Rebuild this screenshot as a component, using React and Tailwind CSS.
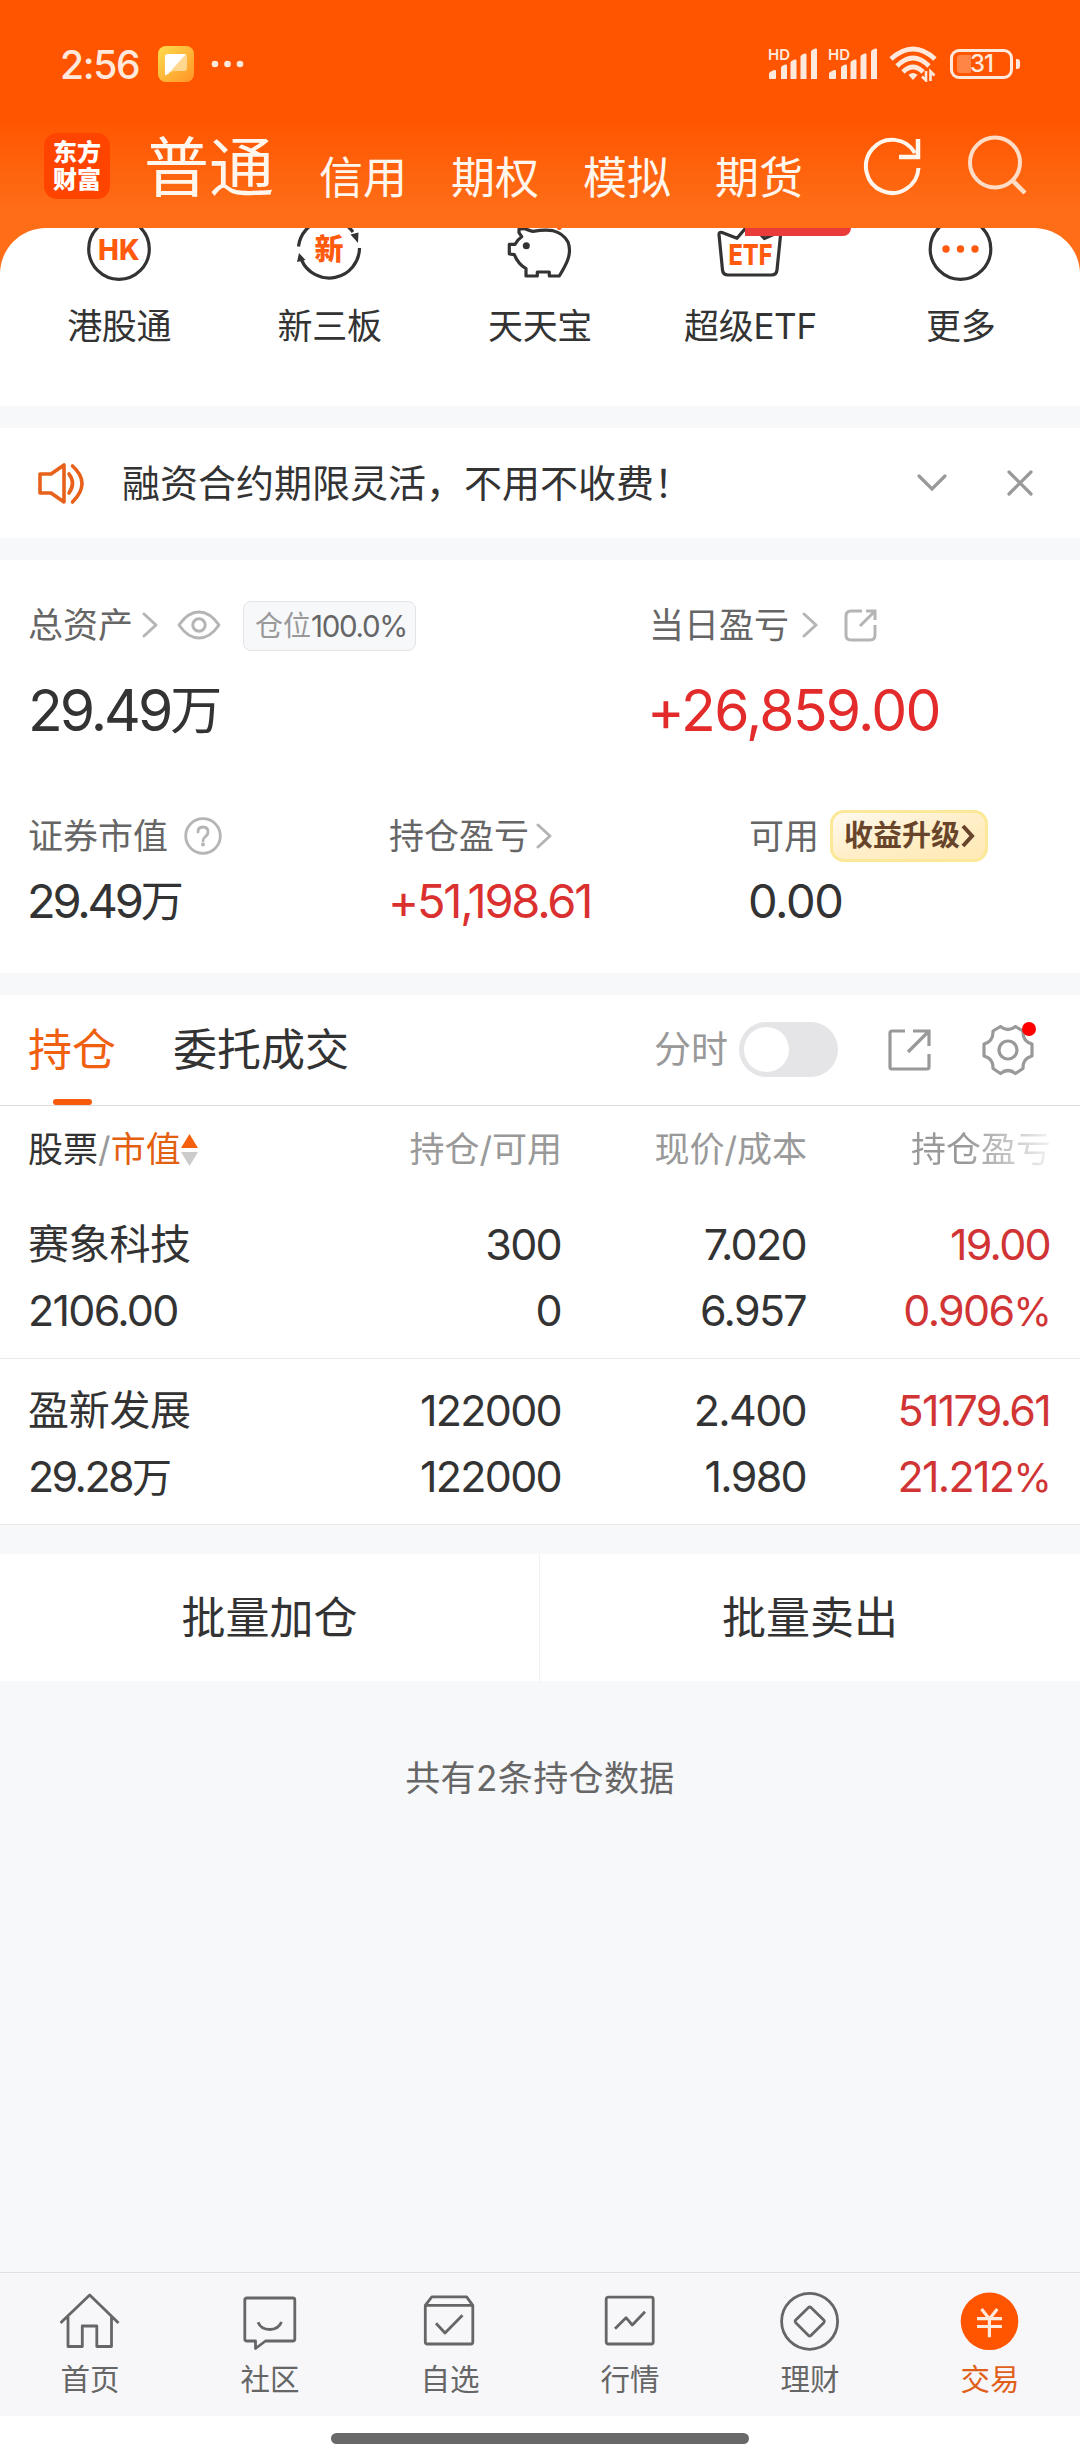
import React from "react";

const SignalBars = () => (
  <svg width="52" height="36" viewBox="0 0 52 36" fill="#ffe9dd">
    <text x="1" y="14" fontSize="15" fontWeight="600" textLength="22" lengthAdjust="spacingAndGlyphs">
      HD
    </text>
    <path d="M2 32v-4q0-1 1-2l4-2q2-.5 2 1v7q0 1-1 1h-5q-1 0-1-1z" />
    <path d="M14 33v-11q0-1 1-2l3-1.500q2-.5 2 1v13.500z" />
    <path d="M23.500 33v-16q0-1 1-2l3-1.500q2-.5 2 1v18.500z" />
    <path d="M33.500 33v-22q0-1 1-2l3-1.500q2-.5 2 1v24.500z" />
    <path d="M44 33v-27q0-1 1-2l3-1.500q2-.5 2 1v29.500z" />
  </svg>
);

const Chevron = ({ className = "" }) => (
  <svg className={className} width="16" height="26" viewBox="0 0 16 26" fill="none" stroke="#b5b5b5" strokeWidth="3" strokeLinecap="round" strokeLinejoin="round">
    <path d="M2 2l12 11L2 24" />
  </svg>
);

const StatusBar = () => (
  <div className="flex h-[128px] items-center pl-[60px] pr-[60px] text-[#ffe9dd]">
    <span className="w-[80px] text-[39px] leading-none font-medium tracking-[-1.300px] whitespace-nowrap">2:56</span>
    <svg className="ml-[18px]" width="36" height="36" viewBox="0 0 36 36">
      <defs>
        <linearGradient id="note" x1="0" y1="0" x2="1" y2="1">
          <stop offset="0" stopColor="#ffdc4e" />
          <stop offset="1" stopColor="#ff9426" />
        </linearGradient>
      </defs>
      <rect width="36" height="36" rx="8" fill="url(#note)" />
      <path d="M7 11q0-3 3-3h16q3 0 3 3v11q0 3-3 3H15l-8 4z" fill="#ffd78f" />
      <path d="M7 11q0-3 3-3h18L10 28l-3 1.500z" fill="#fff" />
    </svg>
    <svg className="ml-[17px]" width="34" height="8" viewBox="0 0 34 8" fill="#ffe9dd">
      <circle cx="4" cy="4" r="3.300" />
      <circle cx="16.500" cy="4" r="3.300" />
      <circle cx="29" cy="4" r="3.300" />
    </svg>
    <div className="ml-auto flex items-center">
      <SignalBars />
      <div className="ml-[8px]">
        <SignalBars />
      </div>
      <svg className="ml-[10px]" width="48" height="36" viewBox="0 0 48 36" fill="none" stroke="#ffe9dd" strokeWidth="4.800">
        <path d="M2 13Q24-7 46 13" />
        <path d="M8 20Q24 4 40 20" />
        <path d="M14 26Q24 16 34 26" />
        <path d="M24 34l-4.500-5q4.500-4 9 0z" fill="#ffe9dd" stroke="none" />
        <path d="M37 25v9.500l-4-4M41.500 35v-9.500l4 4" strokeWidth="2.600" />
      </svg>
      <div className="ml-[13px] flex h-[30px] w-[63px] items-center rounded-[9px] border-[3px] border-[#ffe9dd] pl-[4px]">
        <div className="h-[18px] w-[14px] rounded-l-[3px] bg-[#ff8547]" />
        <span className="ml-[-1px] text-[24px] leading-none font-medium tracking-[-1px]">31</span>
      </div>
      <div className="ml-[3px] h-[10px] w-[4px] rounded-r-[3px] bg-[#ffe9dd]" />
    </div>
  </div>
);

const Header = () => (
  <header className="h-[228px] bg-[linear-gradient(180deg,#ff5500_0px,#ff5500_118px,#ff6d17_210px,#ff6d17_228px)]">
    <StatusBar />
    <div className="flex h-[76px] items-center pl-[44px] text-[#fff6ee]">
      <div className="flex h-[66px] w-[66px] flex-col items-center justify-center rounded-[13px] bg-[#ff4400] text-[24px] leading-[27px] font-black text-white">
        <span>东方</span>
        <span>财富</span>
      </div>
      <span className="ml-[34px] pt-[4px] text-[65px] leading-[76px]">普通</span>
      <nav className="ml-[45px] flex gap-[44px] pt-[23px] text-[44px] leading-[54px]">
        <span>信用</span>
        <span>期权</span>
        <span>模拟</span>
        <span>期货</span>
      </nav>
      <svg className="ml-[58px]" width="64" height="64" viewBox="0 0 64 64" fill="none" stroke="#fff6ee" strokeWidth="4">
        <path d="M57.500 34A26.300 26.600 0 1 1 54 19" />
        <path d="M57 5v18H38" strokeWidth="4.500" />
      </svg>
      <svg className="ml-[42px]" width="64" height="64" viewBox="0 0 64 64" fill="none" stroke="#ffdcc6" strokeWidth="4">
        <circle cx="28" cy="28.500" r="25" />
        <path d="M45.500 46.500L58 59" strokeWidth="4.500" />
      </svg>
    </div>
  </header>
);

const entries = [
  {
    label: "港股通",
    icon: (
      <>
        <circle cx="33" cy="21" r="30.300" />
        <text x="12" y="31.500" fontSize="29" fontWeight="800" textLength="41.500" lengthAdjust="spacingAndGlyphs" fill="#ff5a0e" stroke="none">
          HK
        </text>
      </>
    ),
  },
  {
    label: "新三板",
    icon: (
      <g transform="translate(-1 0)">
        <path d="M2.500 18.500A30.300 30.300 0 0 1 57 4M63.500 20A30.300 30.300 0 0 1 5.500 32" />
        <path d="M54.500 6.500l8-2-.5 10.500zM1 34l2-9 6.500 7z" fill="#333" stroke="none" />
        <text x="18.500" y="31.500" fontSize="29" fontWeight="800" fill="#ff5a0e" stroke="none">
          新
        </text>
      </g>
    ),
  },
  {
    label: "天天宝",
    icon: (
      <>
        <path d="M2.300 16.300H8Q10 12 14.700 8.700L12 4.700V1.200Q17 0 20 1.500T26 3.300Q38 1.500 46 2.700 56 5 61 14 64 22 61 31 59 37 52.300 48H42.300V44H30.300V48H19V40.700Q11 36 7.300 26.700L2.300 26z" />
        <circle cx="19.300" cy="17.700" r="3.500" fill="#333" stroke="none" />
        <circle cx="52.300" cy="-.5" r="2.500" fill="#ff5a0e" stroke="none" />
      </>
    ),
  },
  {
    label: "超级ETF",
    badge: true,
    icon: (
      <>
        <path d="M2 6.500L5.500 42Q6 47 11 47H54.500Q59.500 47 60 42L63.500 7.500Q63 3 60 5L47.300 10.500 33-5 20 10.300 5 4.500Q2 3.500 2 6.500z" />
        <text x="11.500" y="36.800" fontSize="28.500" fontWeight="800" textLength="44" lengthAdjust="spacingAndGlyphs" fill="#ff5a0e" stroke="none">
          ETF
        </text>
      </>
    ),
  },
  {
    label: "更多",
    icon: (
      <>
        <circle cx="32.500" cy="21" r="30.300" />
        <g fill="#ff5a0e" stroke="none">
          <circle cx="18" cy="21" r="3.700" />
          <circle cx="32.500" cy="21" r="3.700" />
          <circle cx="47" cy="21" r="3.700" />
        </g>
      </>
    ),
  },
];

const QuickEntries = () => (
  <section className="h-[178px] bg-[#ff6d17]">
    <div className="grid h-full grid-cols-5 overflow-hidden rounded-t-[46px] bg-white px-[14px]">
      {entries.map((entry) => (
        <div key={entry.label} className="relative flex flex-col items-center">
          <svg width="66" height="64" viewBox="0 0 66 64" fill="none" stroke="#333" strokeWidth="3.200" strokeLinejoin="round">
            {entry.icon}
          </svg>
          {entry.badge && <div className="absolute top-0 left-[100px] h-[8px] w-[106px] rounded-br-[14px] bg-[#ea3a3a]" />}
          <span className="mt-[12px] text-[35px] leading-[44px] tracking-[-0.3px] text-[#333]">{entry.label}</span>
        </div>
      ))}
    </div>
  </section>
);

const Notice = () => (
  <section className="mt-[22px] flex h-[110px] items-center bg-white pl-[36px] pr-[45px]">
    <svg width="50" height="44" viewBox="0 0 50 44" fill="none" stroke="#e8611a" strokeWidth="3.600" strokeLinejoin="round" strokeLinecap="round">
      <path d="M4 13h11L28 4v37L15 32H4z" />
      <path d="M33 13q7 9 0 19M36.500 5q19 17 0 36" />
    </svg>
    <span className="ml-[36px] text-[38px] leading-[50px] text-[#333]">融资合约期限灵活，不用不收费！</span>
    <svg className="ml-auto" width="32" height="20" viewBox="0 0 32 20" fill="none" stroke="#999" strokeWidth="3.200" strokeLinecap="round">
      <path d="M3 3l13 13L29 3" />
    </svg>
    <svg className="ml-[57px]" width="30" height="30" viewBox="0 0 30 30" fill="none" stroke="#999" strokeWidth="3.200" strokeLinecap="round">
      <path d="M4 4l22 22M26 4L4 26" />
    </svg>
  </section>
);

const Assets = () => (
  <section className="mt-[22px] h-[413px] bg-white pt-[39px] pl-[28px] text-[35px] text-[#666]">
    <div className="flex">
      <div className="w-[621px]">
        <div className="flex h-[52px] items-center">
          <span>总资产</span>
          <Chevron className="ml-[9px]" />
          <svg className="ml-[19px]" width="44" height="30" viewBox="0 0 44 30" fill="none" stroke="#b5b5b5" strokeWidth="3">
            <path d="M2 15Q11 2 22 2T42 15Q33 28 22 28T2 15z" strokeLinejoin="round" />
            <circle cx="22" cy="15" r="6.200" />
          </svg>
          <span className="mt-[2px] ml-[22px] flex h-[50px] w-[173px] items-center rounded-[8px] border border-[#e4e4e8] bg-[#f7f8fa] pl-[11px] text-[28px] text-[#999]">
            仓位<span className="text-[29.500px] tracking-[-1.300px] text-[#666]">100.0%</span>
          </span>
        </div>
        <div className="mt-[30px] flex h-[60px] items-center text-[57px] tracking-[-3px] text-[#333]">
          29.49<span className="text-[52px]">万</span>
        </div>
      </div>
      <div>
        <div className="flex h-[52px] items-center">
          <span>当日盈亏</span>
          <Chevron className="ml-[13px]" />
          <svg className="ml-[25px]" width="36" height="36" viewBox="0 0 36 36" fill="none" stroke="#b5b5b5" strokeWidth="3">
            <path d="M19 4H8q-5 0-5 5v19q0 5 5 5h19q5 0 5-5V18" />
            <path d="M23 4h9v9M32 4L17 19" />
          </svg>
        </div>
        <div className="mt-[30px] ml-[-2px] flex h-[60px] items-center text-[57px] tracking-[-1.700px] text-[#e32b2b]">+26,859.00</div>
      </div>
    </div>
    <div className="mt-[69px] grid grid-cols-[361px_361px_1fr]">
      <div>
        <div className="flex h-[52px] items-center">
          <span>证券市值</span>
          <svg className="ml-[15px]" width="40" height="40" viewBox="0 0 40 40" fill="none" stroke="#b5b5b5" strokeWidth="2.800">
            <circle cx="20" cy="20" r="17.300" />
            <path d="M15 16q0-5 5-5t5 5q0 3-3 5-2 1.500-2 4" strokeLinecap="round" />
            <circle cx="20" cy="28.500" r="2" fill="#b5b5b5" stroke="none" />
          </svg>
        </div>
        <div className="mt-[14px] ml-[-1px] flex h-[50px] items-center text-[47px] tracking-[-3.200px] text-[#333]">
          29.49<span className="text-[43px]">万</span>
        </div>
      </div>
      <div>
        <div className="flex h-[52px] items-center">
          <span>持仓盈亏</span>
          <Chevron className="ml-[7px]" />
        </div>
        <div className="mt-[14px] ml-[-1px] flex h-[50px] items-center text-[47px] tracking-[-2.200px] text-[#da3030]">+51,198.61</div>
      </div>
      <div>
        <div className="ml-[-1px] flex h-[52px] items-center">
          <span>可用</span>
          <span className="ml-[11px] flex h-[52px] w-[158px] items-center rounded-[14px] border-[3px] border-[#fbe999] bg-linear-to-br from-[#fffaf0] via-[#ffeec8] to-[#ffeab4] pl-[11px] text-[29px] font-bold text-[#68452a]">
            收益升级
            <svg className="ml-[1px]" width="14" height="24" viewBox="0 0 14 24" fill="none" stroke="#68452a" strokeWidth="4">
              <path d="M2 2l9 10-9 10" />
            </svg>
          </span>
        </div>
        <div className="mt-[14px] ml-[-2px] flex h-[50px] items-center text-[47px] tracking-[-1.400px] text-[#333]">0.00</div>
      </div>
    </div>
  </section>
);

const HoldingTabs = () => (
  <div className="flex h-[111px] items-start border-b border-[#dcdcdc] pl-[28px] text-[44px] text-[#333]">
    <div className="flex h-[111px] w-[88px] flex-col items-center text-[#f0600f]">
      <span className="h-[104px] leading-[110px]">持仓</span>
      <span className="h-[6px] w-[39px] rounded-full bg-[#f85a0c]" />
    </div>
    <span className="ml-[57px] leading-[110px]">委托成交</span>
    <div className="ml-auto flex h-[109px] items-center">
      <span className="text-[37px] text-[#999]">分时</span>
      <div className="ml-[11px] flex h-[55px] w-[99px] items-center rounded-full bg-[#e5e5e8] pl-[5px]">
        <div className="h-[45px] w-[45px] rounded-full bg-white" />
      </div>
      <svg className="ml-[48px]" width="46" height="46" viewBox="0 0 46 46" fill="none" stroke="#999" strokeWidth="3.200">
        <path d="M19 4H6q-2 0-2 2v34q0 2 2 2h35q2 0 2-2V27" />
        <path d="M27 4h16v15M42 5L22 25" />
      </svg>
      <div className="relative mr-[45px] ml-[49px]">
        <svg width="54" height="54" viewBox="0 0 54 54" fill="none" stroke="#999" strokeWidth="3.200" strokeLinejoin="round">
          <path d="M19.500 3.500Q27 9.500 34.500 3.500L42 8Q41.500 18.500 51 21V33Q41.500 35.500 42 45.500L34.500 50.500Q27 44.500 19.500 50.500L12 45.500Q12.500 35.500 3 33V21Q12.500 18.500 12 8z" />
          <circle cx="27" cy="27" r="9" />
        </svg>
        <span className="absolute top-[-1px] right-[-1px] h-[14px] w-[14px] rounded-full bg-[#ff0000]" />
      </div>
    </div>
  </div>
);

const holdings = [
  { name: "赛象科技", value: "2106.00", count: "300", usable: "0", price: "7.020", cost: "6.957", profit: "19.00", rate: "0.906" },
  { name: "盈新发展", value: "29.28", unit: "万", count: "122000", usable: "122000", price: "2.400", cost: "1.980", profit: "51179.61", rate: "21.212" },
];

const Holdings = () => (
  <section className="mt-[22px] bg-white">
    <HoldingTabs />
    <div className="grid h-[87px] grid-cols-[300px_234px_245px_244px] items-center pl-[28px] text-right text-[35px] text-[#999]">
      <span className="flex items-center">
        <span className="text-[#333]">股票</span>
        <span>/</span>
        <span className="text-[#e2600f]">市值</span>
        <svg width="17" height="34" viewBox="0 0 17 34">
          <path d="M8.500 1L17 15H0z" fill="#f5600f" />
          <path d="M8.500 33L17 19H0z" fill="#ccc" />
        </svg>
      </span>
      <span>持仓/可用</span>
      <span>现价/成本</span>
      <span className="bg-linear-to-r from-[#999] from-65% to-[#f3f3f3] to-100% bg-clip-text text-transparent">持仓盈亏</span>
    </div>
    {holdings.map((item) => (
      <div
        key={item.name}
        className="grid h-[166px] grid-cols-[300px_233px_245px_244px] border-b border-[#e9e9e9] pt-[18px] pl-[28px] text-right text-[43px] leading-[66px] tracking-[-1.700px] text-[#333]"
      >
        <div className="text-left">
          <p className="text-[41px] tracking-[-0.300px]">{item.name}</p>
          <p className={item.unit ? "tracking-[-2.600px]" : ""}>
            {item.value}
            <span className="text-[40px]">{item.unit}</span>
          </p>
        </div>
        <div>
          <p>{item.count}</p>
          <p>{item.usable}</p>
        </div>
        <div>
          <p>{item.price}</p>
          <p>{item.cost}</p>
        </div>
        <div className="text-[#d13434]">
          <p>{item.profit}</p>
          <p>
            {item.rate}
            <span className="text-[39px]">%</span>
          </p>
        </div>
      </div>
    ))}
  </section>
);

const tabs = [
  { label: "首页", icon: <path d="M.500 33L29.700 5 58.500 33M8 27V56.500H22.300V36H36.800V56.500H51.500V27" /> },
  {
    label: "社区",
    icon: (
      <>
        <path d="M6.800 8H52.800Q54.800 8 54.800 10V49Q54.800 51 52.800 51H25.500L15.500 58.500V51H6.800Q4.800 51 4.800 49V10Q4.800 8 6.800 8z" />
        <path d="M18 32.300Q21 39.500 29.700 39.500T41.500 32" />
      </>
    ),
  },
  {
    label: "自选",
    icon: (
      <>
        <path d="M5.300 15.300L11.800 6.900H46.600L52.800 15.300V52Q52.800 54 50.800 54H7.300Q5.300 54 5.300 52zM5.300 15.300H52.800" />
        <path d="M16 33.300L25 43 42.500 25.300" />
      </>
    ),
  },
  {
    label: "行情",
    icon: (
      <>
        <rect x="6.200" y="7.200" width="47" height="46.800" rx="2" />
        <path d="M15 38.700L26 27.700 32.300 35 45 21.700" />
      </>
    ),
  },
  {
    label: "理财",
    icon: (
      <>
        <circle cx="29.600" cy="31.300" r="28" />
        <path d="M28.500 17.500Q29.700 16.300 30.900 17.500L44 30.200Q45 31.300 44 32.400L30.900 45.500Q29.700 46.700 28.500 45.500L15.500 32.400Q14.500 31.300 15.500 30.200z" />
      </>
    ),
  },
  {
    label: "交易",
    active: true,
    icon: (
      <>
        <circle cx="29.500" cy="31.300" r="28.800" fill="#ff5500" stroke="none" />
        <path d="M21.500 19L29.400 29 37.300 19M17 28.700H42M17 36.500H42M29.400 29V47.300" stroke="#ffe9db" strokeWidth="3.200" />
      </>
    ),
  },
];

const TabBar = () => (
  <footer className="bg-white">
    <div className="grid h-[144px] grid-cols-6 border-t border-[#e0e0e2] bg-[#f7f7fa] pt-[17px]">
      {tabs.map((tab) => (
        <div key={tab.label} className="flex flex-col items-center">
          <svg width="60" height="62" viewBox="0 0 60 62" fill="none" stroke="#666" strokeWidth="2.800" strokeLinejoin="round">
            {tab.icon}
          </svg>
          <span className={`mt-[7px] text-[29.500px] leading-[40px] ${tab.active ? "text-[#e0601a]" : "text-[#666]"}`}>{tab.label}</span>
        </div>
      ))}
    </div>
    <div className="flex h-[44px] justify-center pt-[17px]">
      <div className="h-[11px] w-[418px] rounded-full bg-[#696969]" />
    </div>
  </footer>
);

const App = () => {
  return (
    <div className="flex h-[2460px] w-[1080px] flex-col overflow-hidden bg-[#f7f8fa] font-['Inter','Noto_Sans_CJK_SC',sans-serif]">
      <Header />
      <QuickEntries />
      <Notice />
      <Assets />
      <Holdings />

      {/* Batch actions */}
      <div className="mt-[29px] flex h-[127px] items-center bg-white text-center text-[44px] leading-[128px] text-[#333]">
        <span className="w-[540px] border-r border-[#f2f2f4]">批量加仓</span>
        <span className="flex-1">批量卖出</span>
      </div>
      <p className="mt-[72px] text-center text-[35px] leading-[50px] tracking-[0.400px] text-[#666]">共有2条持仓数据</p>

      <div className="mt-auto">
        <TabBar />
      </div>
    </div>
  );
};

export default App;
